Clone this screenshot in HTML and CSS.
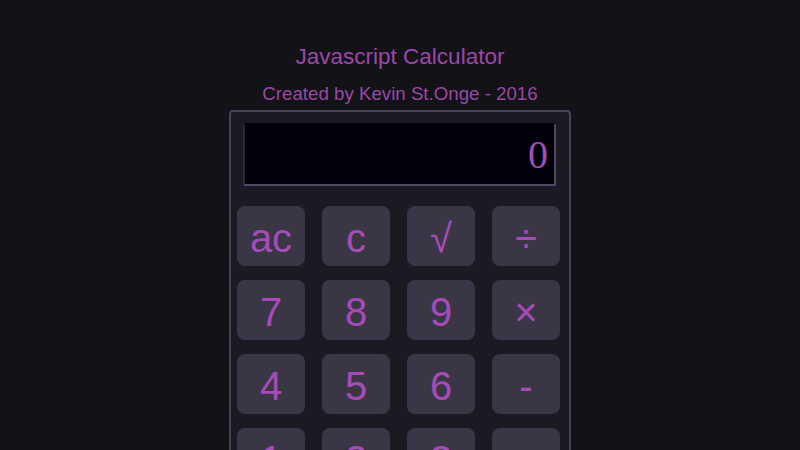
FILE: index.html
```html
<!DOCTYPE html>
<html lang="en">

<head>
  <meta charset="UTF-8">
  <meta name="viewport" content="width=device-width, initial-scale=1.0">
  <title>Javascript Calculator</title>
  <link rel="stylesheet" href="styles.css">
</head>

<body>
  <div class="wrap">
    <h1 class="title">Javascript Calculator</h1>
    <h2 class="subtitle">Created by Kevin St.Onge - 2016</h2>
    <div class="calculator">
      <div class="display" id="display">0</div>
      <div class="keys">
        <button class="key" type="button">ac</button>
        <button class="key" type="button">c</button>
        <button class="key" type="button">&radic;</button>
        <button class="key" type="button">&divide;</button>
        <button class="key" type="button">7</button>
        <button class="key" type="button">8</button>
        <button class="key" type="button">9</button>
        <button class="key" type="button">&times;</button>
        <button class="key" type="button">4</button>
        <button class="key" type="button">5</button>
        <button class="key" type="button">6</button>
        <button class="key" type="button">-</button>
        <button class="key" type="button">1</button>
        <button class="key" type="button">2</button>
        <button class="key" type="button">3</button>
        <button class="key" type="button">+</button>
      </div>
    </div>
  </div>
</body>

</html>
```

FILE: styles.css
```css
/* 기본 스타일 */
body {
  font-family: "Liberation Sans", Arial, sans-serif;
  margin: 0;
  padding: 0;
  background-color: #131217;
  color: #9a48a8;
  overflow: hidden;
}

.wrap {
  display: flex;
  flex-direction: column;
  align-items: center;
  padding-top: 43px;
}

.title {
  font-size: 22.5px;
  font-weight: normal;
  margin: 0;
  line-height: 28px;
}

.subtitle {
  font-size: 18.7px;
  font-weight: normal;
  margin: 12px 0 0;
  line-height: 22px;
}

.calculator {
  margin-top: 5px;
  width: 338px;
  background-color: #1b1a22;
  border: 2px solid #46425a;
  border-bottom: none;
  border-radius: 4px 4px 0 0;
  padding: 11px 0 40px;
}

.display {
  margin: 0 13px 0 12px;
  height: 59px;
  background-color: #03020a;
  border: 2px solid #4d4962;
  border-top-color: #03020a;
  border-left-color: #2a2838;
  font-family: "Liberation Serif", "Times New Roman", serif;
  font-size: 40px;
  line-height: 59px;
  text-align: right;
  padding-right: 6px;
  color: #9e50b4;
}

.keys {
  display: grid;
  grid-template-columns: repeat(4, 68px);
  column-gap: 17px;
  row-gap: 14px;
  padding-left: 6px;
  margin-top: 20px;
}

.key {
  height: 60px;
  border: none;
  border-radius: 8px;
  background-color: #3a3646;
  color: #a64cb8;
  font-family: "Liberation Sans", Arial, sans-serif;
  font-size: 40px;
  padding: 4px 0 0;
}
```
